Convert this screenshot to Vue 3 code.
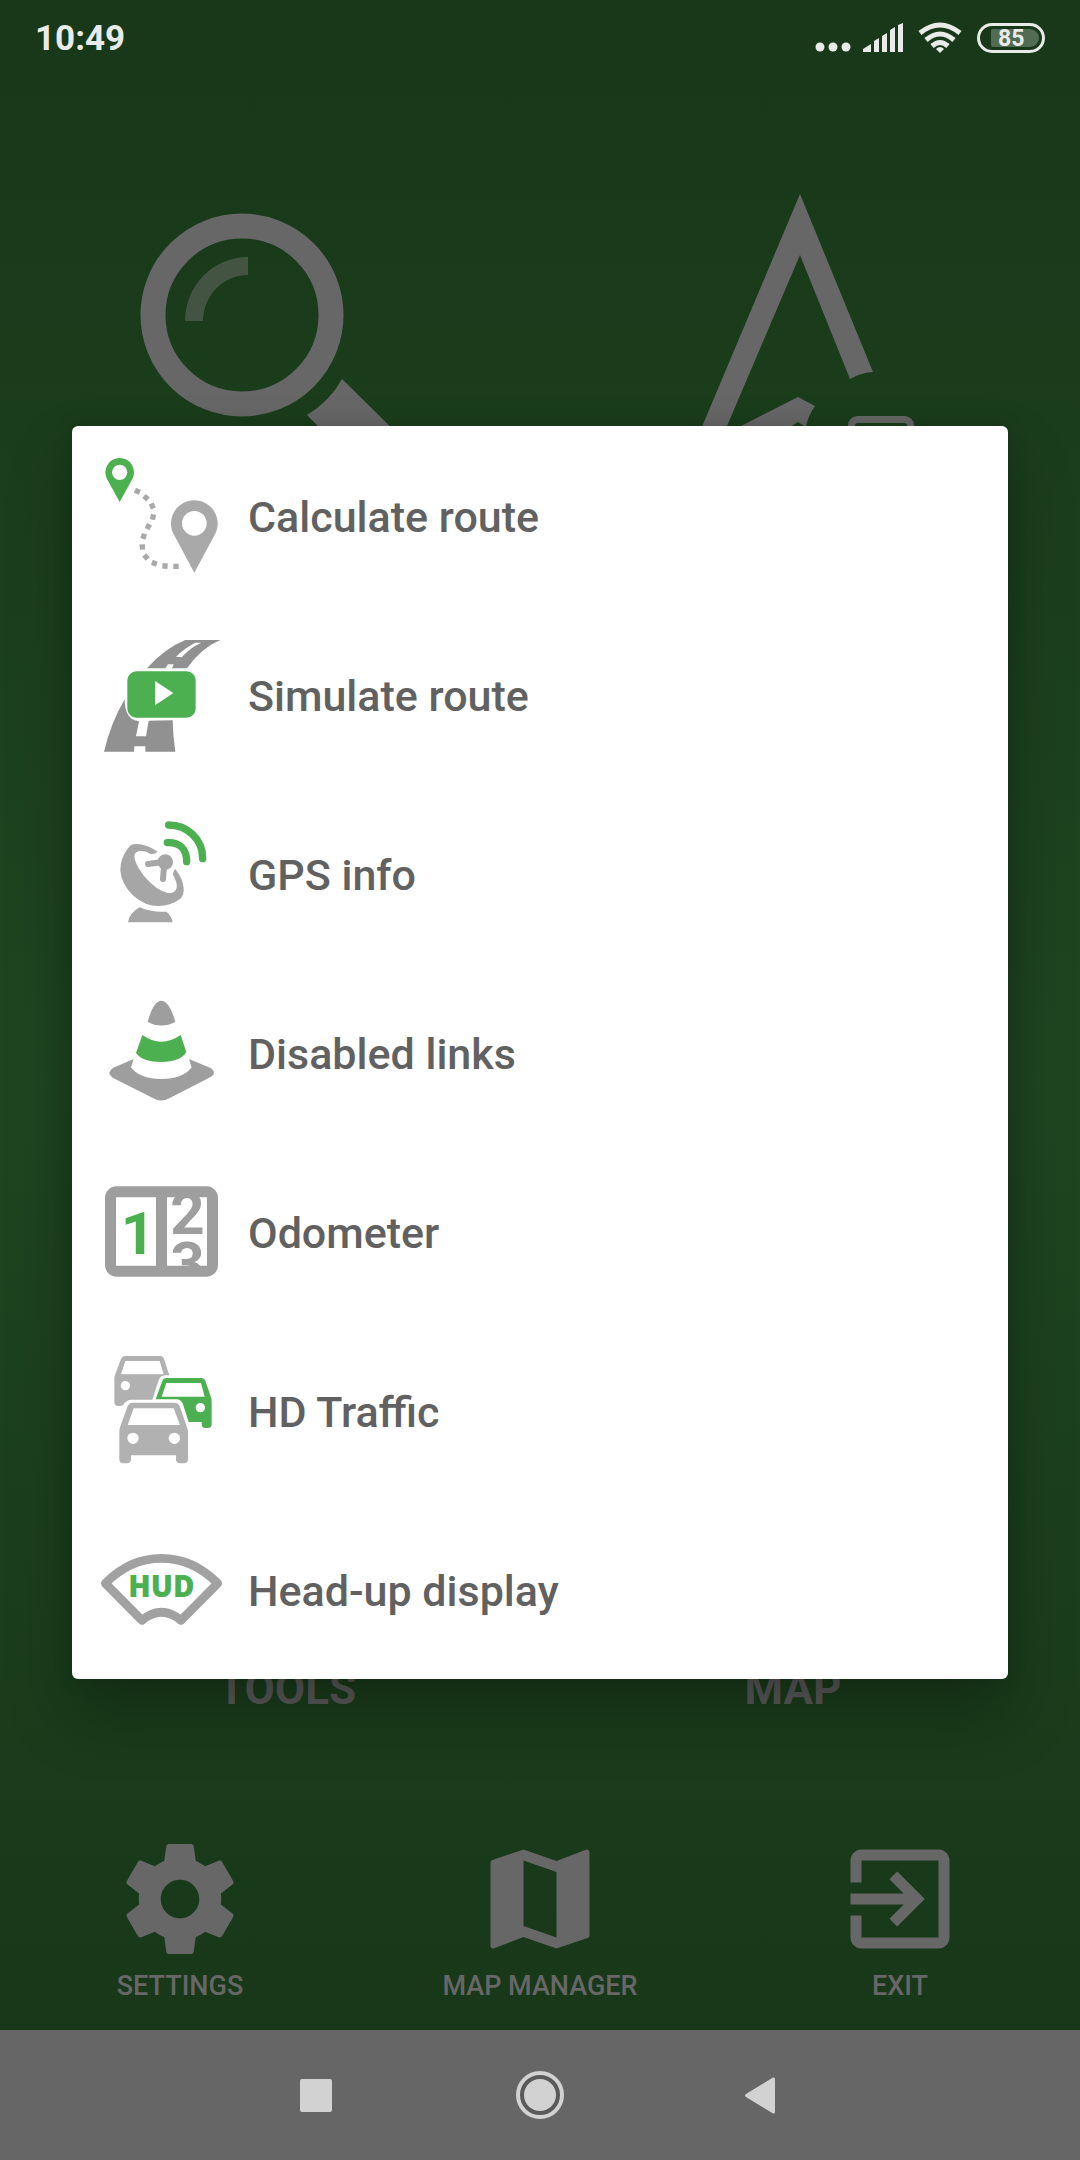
<script setup>
const signalBars = [
  'M83 52V49L91 44V52Z',
  'M94 52V41L99 38V52Z',
  'M102 52V36L107 33V52Z',
  'M110 52V30L115 27V52Z',
  'M118 52V25L123 23V52Z',
]

const routeDots = [
  [142, 154, 25], [168, 173, 40], [187, 198, 68], [189, 231, 102],
  [175, 260, 118], [161, 289, 108], [157, 321, 86], [168, 351, 50],
  [193, 370, 22], [225, 378, 5], [258, 379, 0],
]

const items = [
  { id: 'route', label: 'Calculate route', box: '30 39 375 375' },
  { id: 'simulate', label: 'Simulate route', box: '30 36 375 375' },
  { id: 'gps', label: 'GPS info', box: '30 33 375 375' },
  { id: 'cone', label: 'Disabled links', box: '30 30 375 375' },
  { id: 'odometer', label: 'Odometer', box: '30 27 375 375' },
  { id: 'traffic', label: 'HD Traffic', box: '30 24 375 375' },
  { id: 'hud', label: 'Head-up display', box: '30 -9 375 375' },
]

const actions = [
  {
    label: 'SETTINGS',
    path: 'M19.43 12.98c.04-.32.07-.64.07-.98s-.03-.66-.07-.98l2.11-1.65c.19-.15.24-.42.12-.64l-2-3.46c-.12-.22-.39-.3-.61-.22l-2.49 1c-.52-.4-1.08-.73-1.69-.98l-.38-2.65C14.46 2.18 14.25 2 14 2h-4c-.25 0-.46.18-.49.42l-.38 2.65c-.61.25-1.17.59-1.69.98l-2.49-1c-.23-.09-.49 0-.61.22l-2 3.46c-.13.22-.07.49.12.64l2.11 1.65c-.04.32-.07.65-.07.98s.03.66.07.98l-2.11 1.65c-.19.15-.24.42-.12.64l2 3.46c.12.22.39.3.61.22l2.49-1c.52.4 1.08.73 1.69.98l.38 2.65c.03.24.24.42.49.42h4c.25 0 .46-.18.49-.42l.38-2.65c.61-.25 1.17-.59 1.69-.98l2.49 1c.23.09.49 0 .61-.22l2-3.46c.12-.22.07-.49-.12-.64l-2.11-1.65zM12 15.5c-1.93 0-3.5-1.57-3.5-3.5s1.57-3.5 3.5-3.5 3.5 1.57 3.5 3.5-1.57 3.5-3.5 3.5z',
  },
  {
    label: 'MAP MANAGER',
    path: 'M20.5 3l-.16.03L15 5.1 9 3 3.36 4.9c-.21.07-.36.25-.36.48V20.5c0 .28.22.5.5.5l.16-.03L9 18.9l6 2.1 5.64-1.9c.21-.07.36-.25.36-.48V3.5c0-.28-.22-.5-.5-.5zM15 19l-6-2.11V5l6 2.11V19z',
  },
  {
    label: 'EXIT',
    path: 'M10.09 15.59L11.5 17l5-5-5-5-1.41 1.41L12.67 11H3v2h9.67l-2.58 2.59zM19 3H5c-1.11 0-2 .9-2 2v4h2V5h14v14H5v-4H3v4c0 1.1.89 2 2 2h14c1.1 0 2-.9 2-2V5c0-1.1-.9-2-2-2z',
  },
]
</script>

<template>
  <div class="screen">
    <header class="status">
      <time class="clock">10:49</time>
      <div class="indicators">
        <svg class="signals" viewBox="34 18 150 40" aria-hidden="true">
          <circle cx="40" cy="47" r="4.500" />
          <circle cx="53" cy="47" r="4.500" />
          <circle cx="66" cy="47" r="4.500" />
          <path v-for="bar in signalBars" :key="bar" :d="bar" />
          <g class="wifi">
            <path d="M140 33Q160 17 180 33" />
            <path d="M146 40Q160 28 174 40" />
            <path d="M152 46Q160 39 168 46" />
          </g>
          <path d="M156 49Q160 45 164 49L160 53Z" />
        </svg>
        <div class="battery"><span class="level">85</span></div>
      </div>
    </header>

    <main class="launcher">
      <div class="tiles">
        <button class="tile" type="button" aria-label="Search">
          <svg class="tile-icon" viewBox="137 190 300 300">
            <circle cx="242" cy="315" r="89" fill="none" stroke="currentColor" stroke-width="25" />
            <path class="glint" d="M185 321A63 64 0 0 1 248 257V275A45 46 0 0 0 203 321Z" />
            <path d="M342 379Q330 401 307 415L372 481Q390 494 409 477Q424 459 410 446Z" />
          </svg>
        </button>
        <button class="tile" type="button" aria-label="Navigate">
          <svg class="tile-icon" viewBox="643 190 300 300">
            <path d="M800 194L873 372Q860 373 850 379L800 255L727 426L702 486H677Z" />
            <path d="M798 397L815 406Q809 414 806 426H804L798 422L792 426H741Z" />
            <rect x="851.500" y="419.500" width="59" height="66" rx="6" fill="none" stroke="currentColor" stroke-width="7" />
          </svg>
        </button>
      </div>
      <div class="tiles captions">
        <span>TOOLS</span>
        <span>MAP</span>
      </div>
      <nav class="actions">
        <button v-for="action in actions" :key="action.label" class="action" type="button">
          <svg class="action-icon" viewBox="0 0 24 24" aria-hidden="true"><path :d="action.path" /></svg>
          <span>{{ action.label }}</span>
        </button>
      </nav>
    </main>

    <footer class="system-nav">
      <button type="button" aria-label="Recent apps">
        <svg viewBox="0 0 56 56"><rect x="12" y="12" width="32" height="33" rx="2" /></svg>
      </button>
      <button type="button" aria-label="Home">
        <svg viewBox="0 0 56 56">
          <circle cx="28" cy="28" r="22" fill="#5a5a5a" stroke="currentColor" stroke-width="4" />
          <circle cx="28" cy="28" r="16" />
        </svg>
      </button>
      <button type="button" aria-label="Back">
        <svg viewBox="0 0 56 56"><path d="M10 27L37 10.500Q39 10 39 12V45Q39 47 37 46.500L10 30Q8 28.500 10 27Z" /></svg>
      </button>
    </footer>

    <div class="overlay">
      <div class="dialog" role="dialog" aria-label="Tools">
        <button v-for="item in items" :key="item.id" class="row" type="button">
          <svg class="row-icon" :viewBox="item.box" aria-hidden="true">
            <template v-if="item.id === 'route'">
              <path class="green" fill-rule="evenodd" d="M89 186L51 117A43 43 0 1 1 127 117ZM66 97a23 23 0 1 0 46 0a23 23 0 1 0-46 0Z" />
              <path fill="#a9a9a9" fill-rule="evenodd" d="M313 398L251 283A70 70 0 1 1 375 283ZM276 250a37 37 0 1 0 74 0a37 37 0 1 0-74 0Z" />
              <rect
                v-for="([x, y, angle], i) in routeDots"
                :key="i"
                :x="x - 8"
                :y="y - 8"
                width="16"
                height="16"
                fill="#a9a9a9"
                :transform="`rotate(${angle} ${x} ${y})`"
              />
            </template>

            <template v-else-if="item.id === 'simulate'">
              <g fill="#919191">
                <path d="M286 60H391Q332 85 291 145H246L251 133H234L226 145H171Q222 86 286 60ZM316 68Q284 84 258 110L275 112Q300 83 334 68Z" fill-rule="evenodd" />
                <path d="M104 238Q62 310 42 395H132L133 379H166V395H256Q249 350 248 301L176 302L168 349H138L147 304Q104 300 104 238Z" />
              </g>
              <rect class="green" x="112" y="154" width="205" height="139" rx="27" />
              <path fill="#fff" d="M195 183L250 219L195 256Z" />
            </template>

            <template v-else-if="item.id === 'gps'">
              <g fill="#a6a6a6">
                <path d="M203 155Q170 132 140 132Q122 131 114 145Q91 175 91 210Q93 252 130 287Q165 318 205 318Q242 318 270 297Q283 285 281 265Q279 235 255 206L248 222Q263 248 260 264Q256 281 233 279Q200 272 162 228Q133 190 133 168Q134 153 155 153Q170 154 180 161Q193 164 203 155Z" />
                <path d="M149 322Q185 338 230 335Q246 350 248 367H114Q119 338 149 322Z" />
                <circle cx="226" cy="186" r="23" />
                <path d="M204 176L213 203L232 206V180Z" />
                <path d="M174 192L212 187M219 237L222 200" fill="none" stroke="#a6a6a6" stroke-width="18" stroke-linecap="round" />
              </g>
              <path class="waves" d="M236 75C290 75 338 115 338 176M232 128C270 126 290 148 290 185" />
            </template>

            <template v-else-if="item.id === 'cone'">
              <g fill="#9e9e9e">
                <path d="M173 125Q190 63 214 62Q238 63 256 125Q214 148 173 125Z" />
                <path d="M131 237L70 263Q48 277 68 293L190 355Q214 368 238 355L362 291Q384 277 360 263L297 237L305 262Q280 297 214 297Q148 297 123 262Z" />
              </g>
              <path class="green" d="M157 165Q214 205 272 165L289 217Q270 246 214 246Q158 246 138 219Z" />
            </template>

            <template v-else-if="item.id === 'odometer'">
              <clipPath id="reel"><rect x="231" y="96" width="120" height="230" /></clipPath>
              <rect x="61.500" y="95.500" width="306" height="238" rx="18" fill="none" stroke="#9e9e9e" stroke-width="33" />
              <path fill="#9e9e9e" d="M198 100H231V330H198Z" />
              <text class="green digit" x="92" y="282">1</text>
              <g clip-path="url(#reel)" fill="#9e9e9e">
                <text class="digit" x="241" y="222">2</text>
                <text class="digit" x="241" y="373">3</text>
              </g>
            </template>

            <template v-else-if="item.id === 'traffic'">
              <g fill="#b1b1b1" fill-rule="evenodd">
                <path d="M106 48H210Q219 48 222 57L238 106H225Q212 107 206 120L187 179H125Q110 180 103 190Q100 198 90 198H85Q73 198 73 186V115Q73 110 75 105L93 57Q97 48 106 48ZM106 63L93 103H221L209 63ZM92 137a14 14 0 1 0 28 0a14 14 0 1 0-28 0Z" />
                <path d="M129 188H253Q264 188 269 198L292 265Q294 270 294 278V358Q294 370 282 370H270Q258 370 258 358V346H123V358Q123 370 111 370H100Q88 370 88 358V275Q88 268 90 262L113 198Q118 188 129 188ZM131 205L113 255H270L251 205ZM112 295a17 17 0 1 0 34 0a17 17 0 1 0-34 0ZM236 295a17 17 0 1 0 34 0a17 17 0 1 0-34 0Z" />
              </g>
              <path class="green" fill-rule="evenodd" d="M228 114H335Q342 114 346 122L364 175Q365 180 365 190V252Q365 264 353 264H346Q335 264 335 252V246H296L279 193Q274 180 262 178H197L217 122Q220 114 228 114ZM229 129L215 170H344L333 129ZM317 203a14 14 0 1 0 28 0a14 14 0 1 0-28 0Z" />
            </template>

            <template v-else>
              <path d="M46 160Q120 85 214 85Q309 85 383 160L273 271Q214 223 156 271Z" fill="none" stroke="#a1a1a1" stroke-width="26" stroke-linejoin="round" />
              <text class="green hud" x="214" y="201" text-anchor="middle">HUD</text>
            </template>
          </svg>
          <span class="row-label">{{ item.label }}</span>
        </button>
      </div>
    </div>
  </div>
</template>

<style>
body {
  margin: 0;
  background: #183819;
}
</style>

<style scoped>
.screen {
  position: relative;
  display: flex;
  flex-direction: column;
  min-height: 100vh;
  background: linear-gradient(#183819, #1e4520 50%, #183819 94%);
  color: #676767;
  font-family: Roboto, "Liberation Sans", sans-serif;
  font-weight: 500;
}

button {
  margin: 0;
  padding: 0;
  border: 0;
  background: none;
  color: inherit;
  font: inherit;
}

svg {
  display: block;
  fill: currentColor;
}

.status {
  display: flex;
  align-items: center;
  justify-content: space-between;
  box-sizing: border-box;
  height: 75px;
  padding: 0 35px;
  color: #e8ebe8;
}

.clock {
  padding-top: 3px;
  font-size: 35px;
  font-weight: 700;
  line-height: 40px;
}

.indicators {
  display: flex;
  align-items: center;
  gap: 13px;
}

.signals {
  width: 150px;
  height: 40px;
}

.wifi {
  fill: none;
  stroke: currentColor;
  stroke-width: 5;
}

.battery {
  box-sizing: border-box;
  width: 68px;
  height: 30px;
  padding: 3px 3px 3px 11px;
  border: 3px solid;
  border-radius: 15px;
}

.level {
  display: block;
  box-sizing: border-box;
  height: 18px;
  padding-left: 7px;
  border-radius: 2px 9px 9px 2px;
  background: #526c53;
  font-size: 23px;
  font-weight: 700;
  line-height: 19px;
}

.launcher {
  display: flex;
  flex: 1;
  flex-direction: column;
  padding: 115px 0 28px;
}

.tiles {
  display: grid;
  grid-template-columns: 1fr 1fr;
  justify-items: center;
  padding: 0 34px;
}

.tile-icon {
  width: 300px;
  height: 300px;
}

.glint {
  fill: #435443;
}

.captions {
  margin: auto 0 118px;
  font-size: 44px;
  font-weight: 700;
  line-height: 52px;
  color: #595959;
}

.actions {
  display: grid;
  grid-template-columns: repeat(3, 1fr);
}

.action {
  display: flex;
  flex-direction: column;
  align-items: center;
  gap: 5px;
  font-size: 27px;
  line-height: 32px;
}

.action-icon {
  width: 132px;
  height: 132px;
}

.system-nav {
  display: flex;
  align-items: center;
  justify-content: center;
  gap: 168px;
  height: 130px;
  background: #666;
  color: #d2d2d2;
}

.system-nav svg {
  width: 56px;
  height: 56px;
}

.overlay {
  position: absolute;
  inset: 75px 0 130px;
  display: flex;
  align-items: center;
  padding: 0 72px;
}

.dialog {
  flex: 1;
  border-radius: 6px;
  background: #fff;
  box-shadow: 0 36px 64px rgba(0, 0, 0, 0.25), 0 0 20px rgba(0, 0, 0, 0.15);
}

.row {
  display: flex;
  align-items: center;
  gap: 23px;
  width: 100%;
  padding: 27px 28px;
  color: #616161;
  font-size: 43px;
  line-height: 56px;
  text-align: left;
}

.row-label {
  padding-top: 3px;
}

.row-icon {
  flex: none;
  width: 125px;
  height: 125px;
}

.green {
  fill: #4caf50;
}

.waves {
  fill: none;
  stroke: #4caf50;
  stroke-width: 22;
  stroke-linecap: round;
}

.digit {
  font-size: 180px;
  font-weight: 700;
}

.hud {
  font-family: "Open Sans", Inter, sans-serif;
  font-size: 88px;
  font-weight: 800;
}
</style>
